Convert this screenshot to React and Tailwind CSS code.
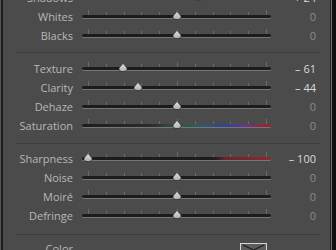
import React from 'react';

const font = { fontFamily: '"Open Sans", "Noto Sans", sans-serif' };

// pos: thumb place from 0 (left) to 1 (right)
const sections = [
    [
        { label: 'Shadows', value: '+ 24', pos: 0.62 },
        { label: 'Whites', value: '0', pos: 0.5 },
        { label: 'Blacks', value: '0', pos: 0.5 },
    ],
    [
        { label: 'Texture', value: '– 61', pos: 0.195 },
        { label: 'Clarity', value: '– 44', pos: 0.28 },
        { label: 'Dehaze', value: '0', pos: 0.5 },
        { label: 'Saturation', value: '0', pos: 0.5, track: 'sat' },
    ],
    [
        { label: 'Sharpness', value: '– 100', pos: 0, track: 'sharp' },
        { label: 'Noise', value: '0', pos: 0.5 },
        { label: 'Moiré', value: '0', pos: 0.5 },
        { label: 'Defringe', value: '0', pos: 0.5 },
    ],
];

const ticks = Array.from({ length: 11 }, (_, i) => 6 + i * 17.8);

const Thumb = () => (
    <svg width="10" height="9" viewBox="0 0 10 9">
        <defs>
            <linearGradient id="thumbFill" x1="0" y1="0" x2="0" y2="1">
                <stop offset="0" stopColor="#e4e4e4" />
                <stop offset="1" stopColor="#adadad" />
            </linearGradient>
        </defs>
        <path d="M5 0.3 L9 5 Q9.7 8.6 5 8.6 Q0.3 8.6 1 5 Z" fill="url(#thumbFill)" stroke="#2e2e2e" strokeWidth="0.8" />
    </svg>
);

const Slider = ({ pos, track }) => {
    let trackClass = 'bg-[#1c1c1c]';
    if (track === 'sat') {
        trackClass = 'bg-[linear-gradient(to_right,#1e1e1e_0%,#2a2a2a_35%,#33573f_52%,#2f5a66_64%,#34438f_76%,#5e3a8e_86%,#8a2a44_94%,#9a2430_100%)]';
    } else if (track === 'sharp') {
        trackClass = 'bg-[linear-gradient(to_right,#1c1c1c_0%,#1c1c1c_70%,#6e2428_76%,#8c2a30_100%)]';
    }
    return (
        <div className="relative w-[189px] h-[19px] flex items-center">
            <div className={`w-full h-[3px] rounded-full ${trackClass} shadow-[0_1px_0_#767676]`}></div>
            <svg className="absolute left-0 top-0" width="189" height="8">
                {ticks.map((x, i) => (
                    <line
                        key={i}
                        x1={Math.round(x) + 0.5}
                        x2={Math.round(x) + 0.5}
                        y1={i === 0 || i === 5 || i === 10 ? 3 : 5}
                        y2="8"
                        stroke="#6a6a6a"
                        strokeWidth="1"
                    />
                ))}
            </svg>
            <div className="absolute top-[4px]" style={{ left: `${1 + pos * 178}px` }}>
                <Thumb />
            </div>
        </div>
    );
};

const Row = ({ label, value, pos, track }) => (
    <div className="flex items-center h-[19px]">
        <div className="w-[70px] text-right text-[11px] text-[#b8b8b8] leading-none">{label}</div>
        <div className="ml-[9px]">
            <Slider pos={pos} track={track} />
        </div>
        <div className={`w-[45px] text-right text-[11px] leading-none ${value === '0' ? 'text-[#8c8c8c]' : 'text-[#dadada]'}`}>
            {value}
        </div>
    </div>
);

const Separator = ({ top }) => (
    <div className={`h-[14px] ${top}`}>
        <div className="ml-[13px] w-[304px] h-px bg-[#3d3d3d]"></div>
    </div>
);

export default function App() {
    return (
        <div className="w-[336px] h-[250px] overflow-hidden flex bg-[#4b4b4b]" style={font}>
            <div className="w-px bg-[#565656]"></div>
            <div className="w-[2px] bg-[#1b1b1b]"></div>
            <div className="w-[327px] bg-[#4b4b4b] overflow-hidden">
                <div className="-mt-[12px]">
                    {sections[0].map(r => <Row key={r.label} {...r} />)}
                    <Separator top="pt-[7px]" />
                    {sections[1].map(r => <Row key={r.label} {...r} />)}
                    <Separator top="pt-[8px]" />
                    {sections[2].map(r => <Row key={r.label} {...r} />)}
                    <Separator top="pt-[9px]" />
                    <div className="flex items-center h-[19px]">
                        <div className="w-[70px] text-right text-[11px] text-[#b8b8b8] leading-none">Color</div>
                        <div className="ml-[9px] w-[189px] flex justify-end pr-[4px] self-start pt-[4px]">
                            <svg width="27" height="12" viewBox="0 0 27 12">
                                <rect x="0.5" y="0.5" width="26" height="11" fill="#5c5c5c" stroke="#d4d4d4" />
                                <path d="M3 2 L13.5 7 L24 2" fill="none" stroke="#1e1e1e" strokeWidth="1.2" />
                            </svg>
                        </div>
                    </div>
                </div>
            </div>
            <div className="w-px bg-[#232323]"></div>
            <div className="w-px bg-[#727272]"></div>
            <div className="flex-1 bg-[#101010]"></div>
        </div>
    );
}
